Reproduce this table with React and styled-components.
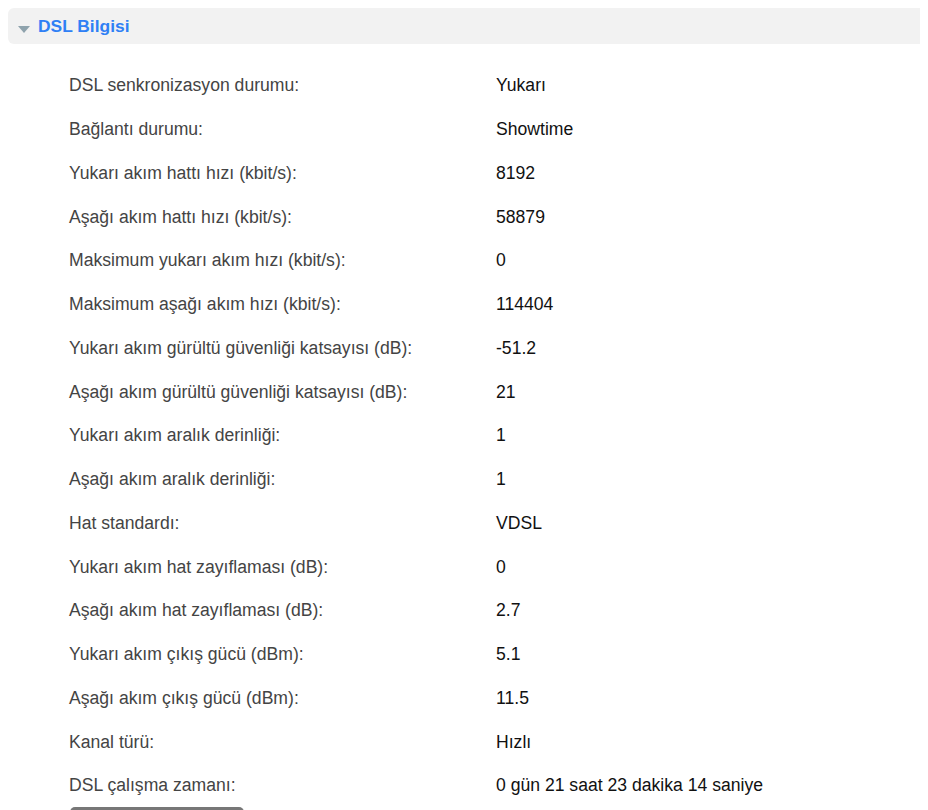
import React from 'react';
import styled, { createGlobalStyle } from 'styled-components';

const GlobalStyle = createGlobalStyle`
    html {
        overflow: hidden;
    }
    body {
        margin: 8px;
        font-family: "Liberation Sans", Arial, sans-serif;
        background: #fff;
    }
`

const Header = styled.div`
    box-sizing: border-box;
    display: flex;
    align-items: center;
    gap: 8px;
    width: calc(100vw - 8px);
    height: 36px;
    padding-left: 10px;
    background: #f2f2f2;
    border-radius: 6px 0 0 6px;
`
const Arrow = styled.span`
    width: 0;
    height: 0;
    margin-top: 6px;
    border-left: 6px solid transparent;
    border-right: 6px solid transparent;
    border-top: 7px solid #8fa3ad;
`
const Title = styled.span`
    color: #2f80f5;
    font-weight: bold;
    font-size: 17.4px;
`
const Table = styled.div`
    display: grid;
    grid-template-columns: 427px 1fr;
    grid-auto-rows: 43.75px;
    padding: 20px 0 0 61px;
    font-size: 17.6px;
`
const Label = styled.div`
    display: flex;
    align-items: center;
    color: #444;
`
const Value = styled.div`
    display: flex;
    align-items: center;
    color: #111;
`
const Button = styled.div`
    width: 174px;
    height: 30px;
    margin: -1px 0 0 62px;
    background: #777;
    border-radius: 5px;
`

const rows = [
    ['DSL senkronizasyon durumu:', 'Yukarı'],
    ['Bağlantı durumu:', 'Showtime'],
    ['Yukarı akım hattı hızı (kbit/s):', '8192'],
    ['Aşağı akım hattı hızı (kbit/s):', '58879'],
    ['Maksimum yukarı akım hızı (kbit/s):', '0'],
    ['Maksimum aşağı akım hızı (kbit/s):', '114404'],
    ['Yukarı akım gürültü güvenliği katsayısı (dB):', '-51.2'],
    ['Aşağı akım gürültü güvenliği katsayısı (dB):', '21'],
    ['Yukarı akım aralık derinliği:', '1'],
    ['Aşağı akım aralık derinliği:', '1'],
    ['Hat standardı:', 'VDSL'],
    ['Yukarı akım hat zayıflaması (dB):', '0'],
    ['Aşağı akım hat zayıflaması (dB):', '2.7'],
    ['Yukarı akım çıkış gücü (dBm):', '5.1'],
    ['Aşağı akım çıkış gücü (dBm):', '11.5'],
    ['Kanal türü:', 'Hızlı'],
    ['DSL çalışma zamanı:', '0 gün 21 saat 23 dakika 14 saniye'],
]

const App = () => {
    return (
        <>
            <GlobalStyle />
            <Header>
                <Arrow />
                <Title>DSL Bilgisi</Title>
            </Header>
            <Table>
                {rows.map(([label, value]) => (
                    <React.Fragment key={label}>
                        <Label>{label}</Label>
                        <Value>{value}</Value>
                    </React.Fragment>
                ))}
            </Table>
            <Button />
        </>
    )
}
export default App;
